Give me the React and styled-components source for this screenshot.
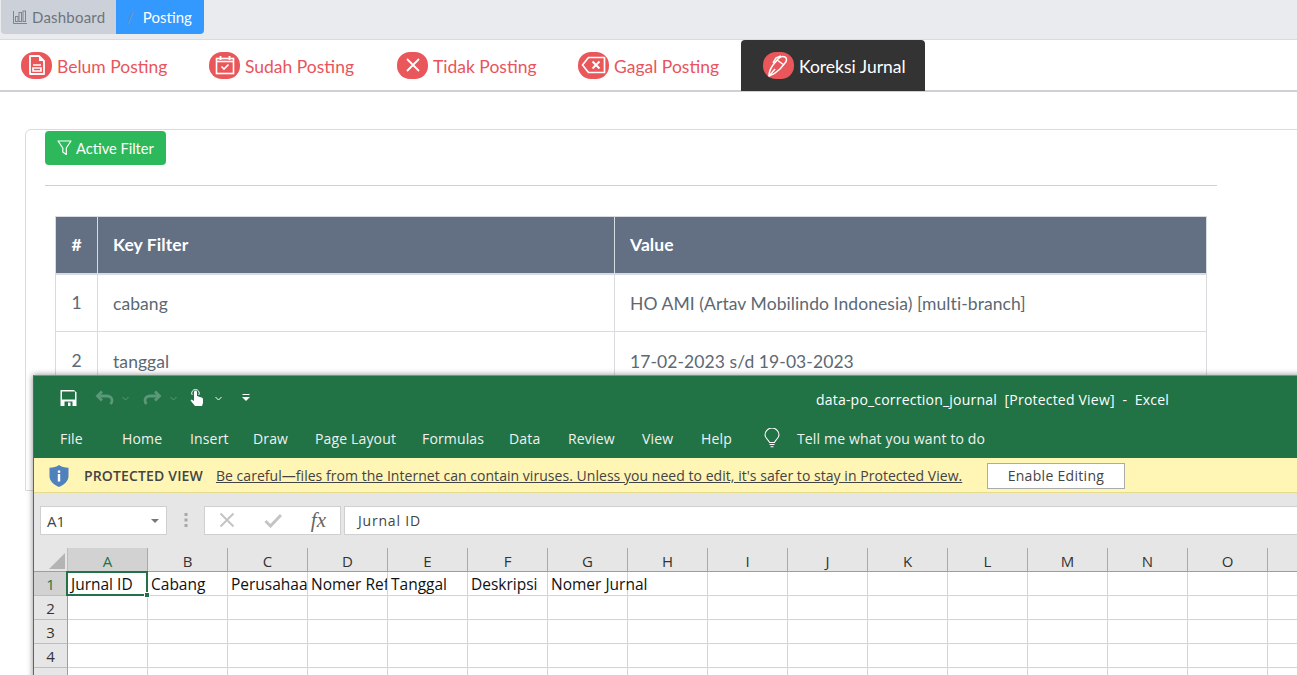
import React from "react";
import styled, { createGlobalStyle } from "styled-components";

const GlobalStyle = createGlobalStyle`
  html, body {
    margin: 0;
    padding: 0;
    background: #fff;
    overflow: hidden;
  }
`;

const Page = styled.div`
  position: relative;
  width: 1297px;
  height: 675px;
  overflow: hidden;
  background: #fff;
  font-family: "Lato", "Noto Sans", sans-serif;
`;

const TopBar = styled.div`
  height: 39px;
  background: #e9ebee;
  display: flex;
  align-items: flex-start;
  padding-left: 1px;
  border-bottom: 1px solid #d8dbe0;
`;

const Breadcrumb = styled.div`
  display: flex;
  height: 34px;
  border-radius: 0 0 4px 4px;
  overflow: hidden;
  font-size: 15px;
`;

const CrumbHome = styled.div`
  width: 115px;
  background: #ccd0d8;
  color: #6c757d;
  display: flex;
  align-items: center;
  gap: 5px;
  padding-left: 12px;
  box-sizing: border-box;
  letter-spacing: 0.2px;
`;

const CrumbActive = styled.div`
  width: 88px;
  background: #3399ff;
  color: #fff;
  display: flex;
  align-items: center;
  gap: 9px;
  padding-left: 11px;
  box-sizing: border-box;
  span:first-child {
    color: #7a93b0;
  }
`;

const TabBar = styled.div`
  display: flex;
  height: 50px;
  background: #fff;
  border-bottom: 2px solid #cdd0d6;
`;

const Tab = styled.div`
  display: flex;
  align-items: center;
  gap: 5px;
  width: ${(p) => p.$w}px;
  box-sizing: border-box;
  padding-left: ${(p) => (p.$active ? 22 : 21)}px;
  height: ${(p) => (p.$active ? 51 : 50)}px;
  color: ${(p) => (p.$active ? "#fff" : "#e9545c")};
  background: ${(p) => (p.$active ? "#333" : "transparent")};
  border-radius: ${(p) => (p.$active ? "4px 4px 0 0" : "0")};
  font-size: 17.5px;
  white-space: nowrap;
`;

const TabLabel = styled.span`
  padding-top: 2px;
`;

const TabIcon = styled.span`
  width: 31px;
  height: 27px;
  border-radius: 13px;
  background: #e9575b;
  display: flex;
  align-items: center;
  justify-content: center;
  flex: none;
`;

const Card = styled.div`
  margin: 37px -20px 0 25px;
  padding: 0 99px 0 19px;
  border: 1px solid #dcdcdc;
  border-radius: 6px 6px 0 0;
  height: 360px;
`;

const GreenButton = styled.button`
  display: flex;
  align-items: center;
  gap: 4px;
  width: 121px;
  height: 34px;
  margin-top: 1px;
  padding: 0 0 0 12px;
  border: 0;
  border-radius: 4px;
  background: #2eb85c;
  color: #fff;
  font-family: inherit;
  font-size: 14.6px;
`;

const Divider = styled.hr`
  margin: 20px 0 30px;
  border: 0;
  border-top: 1px solid #d0d0d0;
`;

const FilterTable = styled.table`
  width: 1152px;
  margin-left: 10px;
  border-collapse: collapse;
  table-layout: fixed;
  font-size: 17.5px;
  letter-spacing: 0.08px;
  color: #5c6873;

  th {
    height: 57px;
    background: #636f83;
    color: #fff;
    font-weight: 700;
    text-align: left;
    padding: 0 15px;
    border: 1px solid #d8dbe0;
    border-bottom: 2px solid #d8dbe0;
    box-sizing: border-box;
  }
  th:first-child,
  td:first-child {
    text-align: center;
    padding: 0;
  }
  td {
    height: 58px;
    padding: 1px 15px 0;
    border: 1px solid #d8dbe0;
    box-sizing: border-box;
  }
`;

/* the Excel window sits over the page, like a window on a desktop */
const ExcelWindow = styled.div`
  position: absolute;
  left: 33px;
  top: 375px;
  width: 1300px;
  height: 320px;
  background: #e6e6e6;
  border-top: 1px solid #8a8a8a;
  border-left: 1px solid #3d7a58;
  box-sizing: border-box;
  box-shadow: 0 0 6px rgba(0, 0, 0, 0.45);
  font-family: "Open Sans", "Noto Sans", sans-serif;
`;

const TitleRow = styled.div`
  height: 44px;
  background: #217346;
  color: #fff;
  display: flex;
  align-items: center;
  padding-left: 26px;
`;

const QuickTools = styled.div`
  display: flex;
  align-items: center;
  width: 756px;
`;

const QuickGap = styled.span`
  width: ${(p) => p.$w}px;
  flex: none;
`;

const TitleText = styled.div`
  white-space: pre;
  font-size: 14px;
  letter-spacing: 0.2px;
  padding-top: 2px;
`;

const MenuRow = styled.div`
  height: 38px;
  background: #217346;
  color: #f1f1f1;
  display: flex;
  align-items: center;
  padding-bottom: 2px;
  box-sizing: border-box;
  font-size: 14px;
  letter-spacing: 0.15px;
`;

const MenuItem = styled.span`
  width: ${(p) => p.$w}px;
  flex: none;
  white-space: nowrap;
  padding-left: ${(p) => p.$pad || 0}px;
  box-sizing: border-box;
`;

const ProtectedBar = styled.div`
  height: 35px;
  background: #fff5b4;
  border-bottom: 1px solid #e6dc8c;
  box-sizing: border-box;
  display: flex;
  align-items: center;
  padding: 1px 0 0 15px;
  font-size: 14px;
  letter-spacing: 0.04px;
  color: #444;
`;

const ProtectedLabel = styled.b`
  font-weight: 600;
  margin: 0 13px 0 15px;
  letter-spacing: 0.15px;
  white-space: nowrap;
`;

const ProtectedLink = styled.span`
  text-decoration: underline;
  white-space: nowrap;
  width: 771px;
  flex: none;
`;

const EnableButton = styled.button`
  width: 138px;
  height: 26px;
  background: #fff;
  border: 1px solid #ababab;
  font-family: inherit;
  font-size: 14px;
  letter-spacing: 0.3px;
  color: #444;
  padding: 0;
`;

const FormulaRow = styled.div`
  height: 55px;
  background: #e6e6e6;
  display: flex;
  align-items: center;
  padding: 0 0 1px 6px;
  box-sizing: border-box;
`;

const NameBox = styled.div`
  width: 127px;
  height: 29px;
  background: #fff;
  border: 1px solid #d0d0d0;
  box-sizing: border-box;
  display: flex;
  align-items: center;
  justify-content: space-between;
  padding: 1px 7px 0 6px;
  font-size: 15px;
  color: #444;
`;

const Grip = styled.div`
  width: 37px;
  display: flex;
  justify-content: center;
`;

const FormulaButtons = styled.div`
  width: 137px;
  height: 29px;
  background: #fff;
  border: 1px solid #d0d0d0;
  box-sizing: border-box;
  display: flex;
  align-items: center;
  justify-content: space-between;
  padding: 0 14px;
  margin-right: 3px;
`;

const FormulaInput = styled.div`
  flex: 1;
  height: 29px;
  background: #fff;
  border: 1px solid #d0d0d0;
  box-sizing: border-box;
  display: flex;
  align-items: center;
  padding: 1px 0 0 13px;
  font-size: 14px;
  letter-spacing: 0.8px;
  color: #444;
`;

const Sheet = styled.div`
  display: grid;
  grid-template-columns: 34px repeat(16, 80px);
  grid-auto-rows: 24px;
  font-size: 15.5px;
  color: #111;
`;

const Corner = styled.div`
  background: #e6e6e6;
  border-right: 1px solid #bdbdbd;
  border-bottom: 1px solid #9e9e9e;
  box-sizing: border-box;
  display: flex;
  align-items: flex-end;
  justify-content: flex-end;
  padding: 0 2px 2px 0;
`;

const ColHead = styled.div`
  background: ${(p) => (p.$sel ? "#d2d2d2" : "#e6e6e6")};
  color: ${(p) => (p.$sel ? "#217346" : "#333")};
  border-right: 1px solid #a9a9a9;
  border-bottom: 1px solid ${(p) => (p.$sel ? "#217346" : "#9e9e9e")};
  box-sizing: border-box;
  display: flex;
  align-items: center;
  justify-content: center;
  padding: 3px 0 0 0;
  font-size: 15px;
`;

const RowHead = styled.div`
  background: ${(p) => (p.$sel ? "#d2d2d2" : "#e6e6e6")};
  color: ${(p) => (p.$sel ? "#217346" : "#333")};
  border-right: 1px solid ${(p) => (p.$sel ? "#217346" : "#9e9e9e")};
  border-bottom: 1px solid #bdbdbd;
  box-sizing: border-box;
  display: flex;
  align-items: center;
  justify-content: center;
  font-size: 15px;
`;

const Cell = styled.div`
  position: relative;
  background: #fff;
  border-right: 1px solid #d4d4d4;
  border-bottom: 1px solid #d4d4d4;
  box-sizing: border-box;
  padding-left: 3px;
  line-height: 24px;
  white-space: nowrap;
  overflow: ${(p) => (p.$spill ? "visible" : "hidden")};
  z-index: ${(p) => (p.$spill ? 1 : 0)};
`;

const CellSelect = styled.span`
  position: absolute;
  left: -2px;
  top: -1px;
  right: -1px;
  bottom: -1px;
  border: 2px solid #217346;
  pointer-events: none;
  &::after {
    content: "";
    position: absolute;
    right: -4px;
    bottom: -4px;
    width: 4px;
    height: 4px;
    background: #217346;
    border: 1px solid #fff;
  }
`;

const FileIcon = () => (
  <svg width="18" height="20" viewBox="0 0 18 20">
    <path d="M2 1h9l5 5v13H2z" fill="none" stroke="#fff" strokeWidth="1.8" strokeLinejoin="round" />
    <path d="M11 1v5h5z" fill="#fff" />
    <path d="M5 10h8M5 13h8v3H5z" fill="none" stroke="#fff" strokeWidth="1.6" />
  </svg>
);

const CalendarIcon = () => (
  <svg width="20" height="20" viewBox="0 0 20 20" fill="none" stroke="#fff">
    <rect x="1.500" y="3.500" width="17" height="15" strokeWidth="1.600" />
    <path d="M1.500 6.500h17" strokeWidth="1.600" />
    <path d="M5.500 1v4M14.500 1v4" strokeWidth="1.800" />
    <path d="M6.500 11.500l2.500 2.500 4.500-4.500" strokeWidth="1.600" />
  </svg>
);

const CrossIcon = () => (
  <svg width="16" height="16" viewBox="0 0 16 16" fill="none" stroke="#fff" strokeWidth="1.800">
    <path d="M2 2l12 12M14 2L2 14" />
  </svg>
);

const BackspaceIcon = () => (
  <svg width="25" height="18" viewBox="0 0 25 18" fill="none" stroke="#fff" strokeWidth="1.700">
    <path d="M7.500 1.500h16v15h-16L1.500 9z" strokeLinejoin="round" />
    <path d="M11.500 5.500l7 7M18.500 5.500l-7 7" strokeWidth="2" />
  </svg>
);

const PenIcon = () => (
  <svg width="26" height="24" viewBox="0 0 26 24" fill="none" stroke="#fff" strokeWidth="1.500" strokeLinejoin="round">
    <path d="M3 22c0-3 1-7 4-11l5-6c2-2 5-3 7-2s2 4 0 6l-5 6c-4 4-8 6-11 7z" />
    <path d="M11 6l7 5" />
    <path d="M3 22l6-7" />
    <path d="M15 2l-5 2-3 5" />
  </svg>
);

const ChartIcon = () => (
  <svg width="14" height="14" viewBox="0 0 14 14" fill="none" stroke="#7d8590" strokeWidth="1">
    <path d="M.5 1v12.500H14" />
    <rect x="2.500" y="6.500" width="2.500" height="5" />
    <rect x="6" y="2.500" width="2.500" height="9" />
    <rect x="10" y="1" width="2.500" height="10.500" />
  </svg>
);

const FunnelIcon = () => (
  <svg width="15" height="16" viewBox="0 0 15 16" fill="none" stroke="#fff" strokeWidth="1.200" strokeLinejoin="round">
    <path d="M1 1h13L9.300 8v6.500l-3.500-2.500V8z" />
  </svg>
);

const SaveIcon = () => (
  <svg width="17" height="16" viewBox="0 0 17 16">
    <path d="M0.500 0h13.500L16.500 2.500V16H0.500z" fill="#fff" />
    <rect x="2" y="1.500" width="13" height="8" fill="#217346" />
    <rect x="4.500" y="11.500" width="8" height="4.500" fill="#217346" />
    <rect x="8" y="12.500" width="2.500" height="3.500" fill="#fff" />
  </svg>
);

const UndoIcon = ({ flip }) => (
  <svg width="19" height="16" viewBox="0 0 19 16" fill="none" stroke="#5a9878" strokeWidth="2.800" style={flip ? { transform: "scaleX(-1)" } : undefined}>
    <path d="M7 1.500L2.500 6 7 10.500" />
    <path d="M2.500 6H12c3 0 5 1.800 5 4.200 0 1.400-.6 2.800-1.500 3.800" />
  </svg>
);

const Caret = ({ color }) => (
  <svg width="7" height="5" viewBox="0 0 7 5" fill="none" stroke={color} strokeWidth="1">
    <path d="M.5 1l3 3 3-3" />
  </svg>
);

const TouchIcon = () => (
  <svg width="15" height="18" viewBox="0 0 15 18">
    <path d="M5 7V3a1.500 1.500 0 013 0v4l4.500 1.500c1 .4 1.500 1 1.500 2V14l-1 3H6l-4.500-5.500 1-1L5 12z" fill="#fff" />
    <path d="M3.200 6A3.600 3.600 0 016.500 0.600 3.600 3.600 0 019.800 6" fill="none" stroke="#fff" strokeWidth="1" />
  </svg>
);

const CustomizeIcon = () => (
  <svg width="8" height="8" viewBox="0 0 8 8" fill="#fff">
    <rect x="0.500" y="0" width="7" height="1" />
    <path d="M0 3h8L4 7z" />
  </svg>
);

const BulbIcon = () => (
  <svg width="16" height="20" viewBox="0 0 16 20" fill="none" stroke="#fff" strokeWidth="1.100">
    <path d="M5.500 14.500C5 12 1 10.500 1 7a7 7 0 0114 0c0 3.500-4 5-4.500 7.500z" />
    <path d="M5.500 16.500h5M6.500 18.800h3" />
  </svg>
);

const ShieldIcon = () => (
  <svg width="20" height="22" viewBox="0 0 20 22">
    <path d="M10 0c2.500 1.800 5.500 2.700 9.500 2.800V11c0 5-4 8.500-9.500 11C4.500 19.500.5 16 .5 11V2.800C4.500 2.700 7.500 1.800 10 0z" fill="#4f81bd" />
    <rect x="8.800" y="9" width="2.400" height="7.500" fill="#fff" />
    <rect x="8.800" y="5.500" width="2.400" height="2.300" fill="#fff" />
  </svg>
);

const Triangle = () => (
  <svg width="16" height="16" viewBox="0 0 16 16">
    <path d="M16 0v16H0z" fill="#b4b4b4" />
  </svg>
);

const DropCaret = () => (
  <svg width="8" height="4" viewBox="0 0 8 4">
    <path d="M0 0h8L4 4z" fill="#777" />
  </svg>
);

const GripDots = () => (
  <svg width="4" height="14" viewBox="0 0 4 14" fill="#a8a8a8">
    <rect x="0.500" y="0" width="3" height="3" />
    <rect x="0.500" y="5.500" width="3" height="3" />
    <rect x="0.500" y="11" width="3" height="3" />
  </svg>
);

const XMark = () => (
  <svg width="16" height="16" viewBox="0 0 16 16" fill="none" stroke="#c4c4c4" strokeWidth="2">
    <path d="M1.500 1.500l13 13M14.500 1.500l-13 13" />
  </svg>
);

const CheckMark = () => (
  <svg width="18" height="15" viewBox="0 0 18 15" fill="none" stroke="#c4c4c4" strokeWidth="3">
    <path d="M1.500 8l5 5L17 2" />
  </svg>
);

const FxMark = styled.i`
  font-family: "Liberation Serif", serif;
  font-size: 21px;
  color: #666;
`;

const tabs = [
  { label: "Belum Posting", w: 188, icon: <FileIcon /> },
  { label: "Sudah Posting", w: 188, icon: <CalendarIcon /> },
  { label: "Tidak Posting", w: 181, icon: <CrossIcon /> },
  { label: "Gagal Posting", w: 184, icon: <BackspaceIcon /> },
  { label: "Koreksi Jurnal", w: 184, icon: <PenIcon />, active: true },
];

const filters = [
  { no: 1, key: "cabang", value: "HO AMI (Artav Mobilindo Indonesia) [multi-branch]" },
  { no: 2, key: "tanggal", value: "17-02-2023 s/d 19-03-2023" },
];

const menu = [
  { label: "File", w: 88, pad: 26 },
  { label: "Home", w: 68 },
  { label: "Insert", w: 63 },
  { label: "Draw", w: 62 },
  { label: "Page Layout", w: 107 },
  { label: "Formulas", w: 87 },
  { label: "Data", w: 59 },
  { label: "Review", w: 74 },
  { label: "View", w: 59 },
  { label: "Help", w: 32 },
];

const columns = "ABCDEFGHIJKLMNO ".split("");
const firstRow = ["Jurnal ID", "Cabang", "Perusahaan", "Nomer Ref", "Tanggal", "Deskripsi", "Nomer Jurnal"];

function App() {
  return (
    <Page>
      <GlobalStyle />
      <TopBar>
        <Breadcrumb>
          <CrumbHome>
            <ChartIcon />
            Dashboard
          </CrumbHome>
          <CrumbActive>
            <span>/</span>
            <span>Posting</span>
          </CrumbActive>
        </Breadcrumb>
      </TopBar>
      <TabBar>
        {tabs.map((tab) => (
          <Tab key={tab.label} $w={tab.w} $active={tab.active}>
            <TabIcon>{tab.icon}</TabIcon>
            <TabLabel>{tab.label}</TabLabel>
          </Tab>
        ))}
      </TabBar>
      <Card>
        <GreenButton>
          <FunnelIcon />
          Active Filter
        </GreenButton>
        <Divider />
        <FilterTable>
          <colgroup>
            <col style={{ width: 42 }} />
            <col style={{ width: 517 }} />
            <col />
          </colgroup>
          <thead>
            <tr>
              <th>#</th>
              <th>Key Filter</th>
              <th>Value</th>
            </tr>
          </thead>
          <tbody>
            {filters.map((row) => (
              <tr key={row.no}>
                <td>{row.no}</td>
                <td>{row.key}</td>
                <td>{row.value}</td>
              </tr>
            ))}
          </tbody>
        </FilterTable>
      </Card>

      <ExcelWindow>
        <TitleRow>
          <QuickTools>
            <SaveIcon />
            <QuickGap $w={18} />
            <UndoIcon />
            <QuickGap $w={8} />
            <Caret color="#5a9878" />
            <QuickGap $w={14} />
            <UndoIcon flip />
            <QuickGap $w={8} />
            <Caret color="#5a9878" />
            <QuickGap $w={12} />
            <TouchIcon />
            <QuickGap $w={11} />
            <Caret color="#fff" />
            <QuickGap $w={20} />
            <CustomizeIcon />
          </QuickTools>
          <TitleText>data-po_correction_journal  [Protected View]  -  Excel</TitleText>
        </TitleRow>
        <MenuRow>
          {menu.map((item) => (
            <MenuItem key={item.label} $w={item.w} $pad={item.pad}>
              {item.label}
            </MenuItem>
          ))}
          <MenuItem $w={31} />
          <BulbIcon />
          <MenuItem $w={17} />
          <span>Tell me what you want to do</span>
        </MenuRow>
        <ProtectedBar>
          <ShieldIcon />
          <ProtectedLabel>PROTECTED VIEW</ProtectedLabel>
          <ProtectedLink>Be careful—files from the Internet can contain viruses. Unless you need to edit, it's safer to stay in Protected View.</ProtectedLink>
          <EnableButton>Enable Editing</EnableButton>
        </ProtectedBar>
        <FormulaRow>
          <NameBox>
            A1
            <DropCaret />
          </NameBox>
          <Grip>
            <GripDots />
          </Grip>
          <FormulaButtons>
            <XMark />
            <CheckMark />
            <FxMark>fx</FxMark>
          </FormulaButtons>
          <FormulaInput>Jurnal ID</FormulaInput>
        </FormulaRow>
        <Sheet>
          <Corner>
            <Triangle />
          </Corner>
          {columns.map((c, i) => (
            <ColHead key={c} $sel={i === 0}>
              {c}
            </ColHead>
          ))}
          {[1, 2, 3, 4, 5].map((r) => (
            <React.Fragment key={r}>
              <RowHead $sel={r === 1}>{r < 5 ? r : ""}</RowHead>
              {columns.map((c, i) => (
                <Cell key={c} $spill={r === 1 && (i === 6 || i === 0)}>
                  {r === 1 ? firstRow[i] : ""}
                  {r === 1 && i === 0 && <CellSelect />}
                </Cell>
              ))}
            </React.Fragment>
          ))}
        </Sheet>
      </ExcelWindow>
    </Page>
  );
}

export default App;
